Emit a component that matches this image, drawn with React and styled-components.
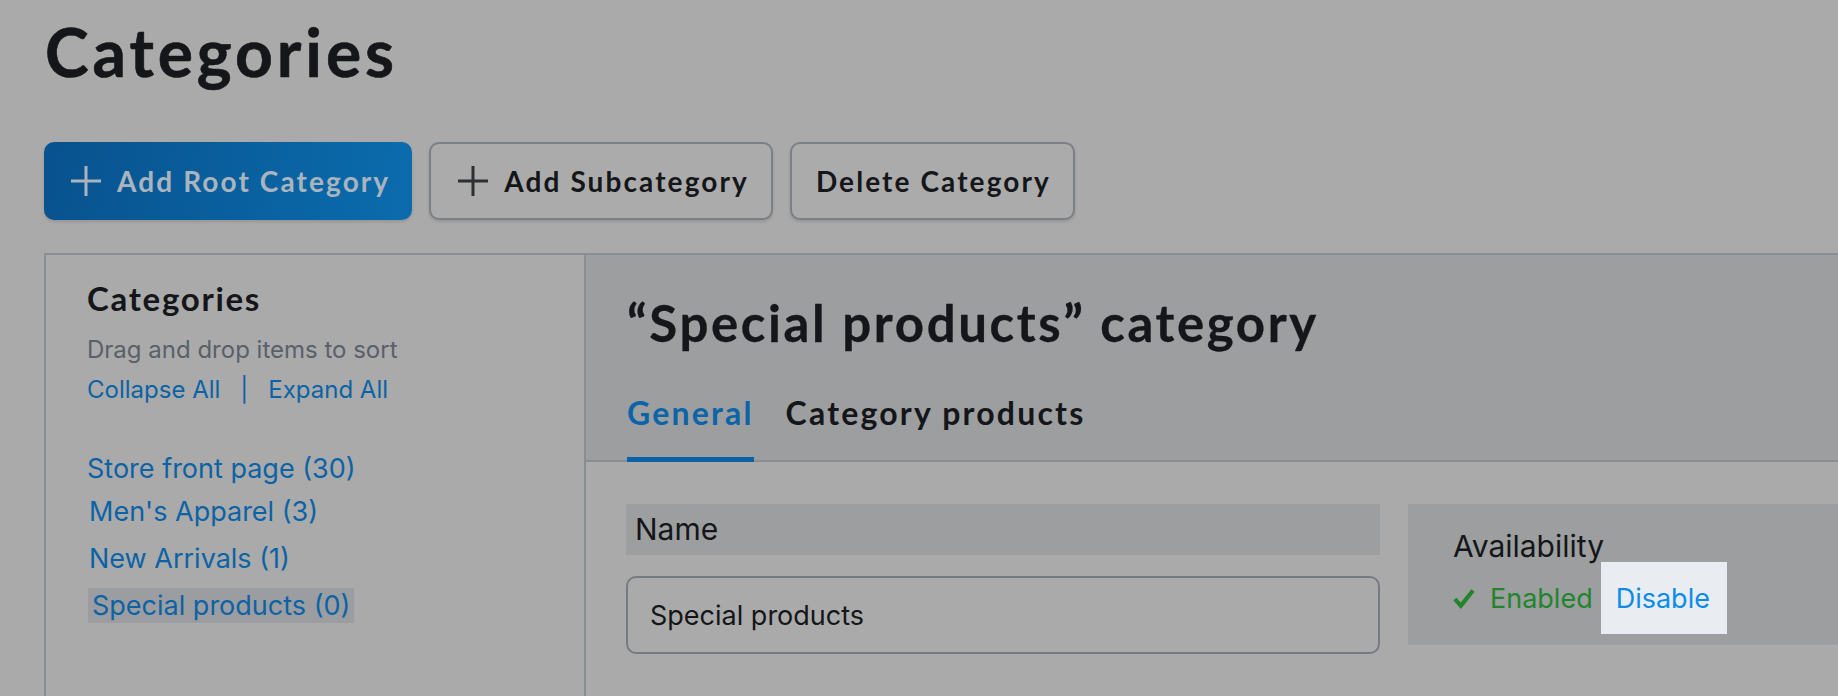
import React from "react";
import styled, { createGlobalStyle } from "styled-components";

const GlobalStyle = createGlobalStyle`
  html, body {
    margin: 0;
    padding: 0;
  }
  body {
    background: #aaaaaa;
    color: #141619;
    font-family: Inter, "Noto Sans", sans-serif;
    overflow: hidden;
  }
`;

const heading = `font-family: Lato, "Noto Sans", sans-serif; font-weight: 700;`;

const Page = styled.div`
  width: 1838px;
  height: 696px;
  box-sizing: border-box;
  padding: 21px 0 0 44px;
  overflow: hidden;
`;

const Title = styled.h1`
  ${heading}
  margin: -1px 0 1px 1px;
  font-size: 66px;
  line-height: 64px;
  letter-spacing: 3.9px;
  -webkit-text-stroke: 0.6px #141619;
`;

const Toolbar = styled.div`
  display: flex;
  gap: 17px;
  margin-top: 58px;
`;

const Button = styled.button`
  ${heading}
  display: inline-flex;
  align-items: center;
  gap: 15px;
  height: 78px;
  box-sizing: border-box;
  padding: 0 22px 0 24px;
  border-radius: 10px;
  font-size: 28px;
  letter-spacing: 2.1px;
  cursor: pointer;
  border: ${(p) => (p.$primary ? "none" : "2px solid #7b7f86")};
  background: ${(p) =>
    p.$primary ? "linear-gradient(100deg, #08528e, #0b6cad)" : "#ababab"};
  color: ${(p) => (p.$primary ? "#aab4be" : "#141619")};
  box-shadow: 0 2px 3px rgba(0, 0, 0, 0.12);

  svg {
    margin-left: 2px;
  }
`;

const Panel = styled.div`
  display: grid;
  grid-template-columns: 540px 1fr;
  width: 2000px;
  min-height: 480px;
  margin-top: 33px;
  border: 2px solid #8a8d92;
`;

const Sidebar = styled.aside`
  border-right: 2px solid #8a8d92;
  padding: 27px 0 0 41px;
`;

const SideTitle = styled.h2`
  ${heading}
  margin: 0 0 16px;
  font-size: 33px;
  line-height: 32px;
  letter-spacing: 1.7px;
`;

const Hint = styled.div`
  font-size: 24px;
  line-height: 40px;
  color: #59606a;
`;

const Tools = styled.div`
  font-size: 24px;
  line-height: 40px;
  color: #0b63a6;
`;

const Sep = styled.span`
  margin: 0 20px;
`;

const Tree = styled.div`
  margin-top: 41px;
  display: flex;
  flex-direction: column;
`;

const Children = styled.div`
  display: flex;
  flex-direction: column;
  align-items: flex-start;
  gap: 12px;
  margin: 7px 0 0 2px;
`;

const Node = styled.a`
  align-self: flex-start;
  font-size: 27px;
  line-height: ${(p) => (p.$root ? "36px" : "35px")};
  color: #0b63a6;
  padding: 0 ${(p) => (p.$active ? "4px" : "0")};
  margin-left: ${(p) => (p.$active ? "-1px" : "0")};
  background: ${(p) => (p.$active ? "#9c9da0" : "transparent")};
  text-decoration: none;
`;

const Main = styled.section`
  display: flex;
  flex-direction: column;
`;

const Header = styled.div`
  background: #9d9ea0;
  padding: 43px 0 0 41px;
  border-bottom: 2px solid #8a8d92;
`;

const Heading = styled.h2`
  ${heading}
  margin: 0;
  font-size: 51px;
  line-height: 49px;
  letter-spacing: 2.6px;
  -webkit-text-stroke: 0.3px #141619;
`;

const Tabs = styled.div`
  display: flex;
  gap: 32px;
  margin: 50px 0 -2px;
`;

const Tab = styled.div`
  ${heading}
  font-size: 32px;
  line-height: 32px;
  letter-spacing: 2.2px;
  padding-bottom: 28px;
  border-bottom: 5px solid ${(p) => (p.$active ? "#0862a5" : "transparent")};
  color: ${(p) => (p.$active ? "#0b64a8" : "#141619")};
`;

const Content = styled.div`
  display: grid;
  grid-template-columns: 754px 1fr;
  gap: 28px;
  align-items: start;
  padding: 42px 0 0 40px;
`;

const Field = styled.div`
  display: flex;
  flex-direction: column;
`;

const Label = styled.label`
  height: 51px;
  line-height: 51px;
  padding-left: 9px;
  background: #9d9ea0;
  font-size: 30px;
`;

const Input = styled.input`
  margin-top: 21px;
  height: 78px;
  box-sizing: border-box;
  padding: 0 22px;
  border: 2px solid #767b83;
  border-radius: 10px;
  background: #aaaaaa;
  font-family: Inter, "Noto Sans", sans-serif;
  font-size: 27px;
  color: #141619;
  outline: none;
`;

const Availability = styled.div`
  background: #9d9ea0;
  padding: 23px 0 11px 45px;
`;

const AvailTitle = styled.div`
  font-size: 30px;
  line-height: 35px;
  padding-top: 2px;
  margin-bottom: -2px;
`;

const StatusRow = styled.div`
  display: flex;
  align-items: center;
  height: 72px;
`;

const Enabled = styled.span`
  display: inline-flex;
  align-items: center;
  gap: 15px;
  font-size: 27px;
  color: #22852c;
`;

const Disable = styled.button`
  margin-left: 8px;
  height: 72px;
  padding: 0 17px 0 15px;
  border: none;
  background: #e9edf1;
  color: #0a8ceb;
  font-family: Inter, "Noto Sans", sans-serif;
  font-size: 27px;
  cursor: pointer;
`;

const Plus = ({ color }) => (
  <svg width="32" height="32" viewBox="0 0 32 32">
    <path d="M16 1v30M1 16h30" stroke={color} strokeWidth="3" />
  </svg>
);

const Check = () => (
  <svg width="22" height="21" viewBox="0 0 22 21">
    <path
      d="M2 11l5.8 6.8L20 2.5"
      fill="none"
      stroke="#22852c"
      strokeWidth="4.2"
      strokeLinejoin="miter"
    />
  </svg>
);

export default function App() {
  return (
    <Page>
      <GlobalStyle />
      <Title>Categories</Title>
      <Toolbar>
        <Button $primary>
          <Plus color="#aab4be" />
          Add Root Category
        </Button>
        <Button>
          <Plus color="#2c2f33" />
          Add Subcategory
        </Button>
        <Button>Delete Category</Button>
      </Toolbar>
      <Panel>
        <Sidebar>
          <SideTitle>Categories</SideTitle>
          <Hint>Drag and drop items to sort</Hint>
          <Tools>
            Collapse All<Sep>|</Sep>Expand All
          </Tools>
          <Tree>
            <Node $root>Store front page (30)</Node>
            <Children>
              <Node>Men's Apparel (3)</Node>
              <Node>New Arrivals (1)</Node>
              <Node $active>Special products (0)</Node>
            </Children>
          </Tree>
        </Sidebar>
        <Main>
          <Header>
            <Heading>“Special products” category</Heading>
            <Tabs>
              <Tab $active>General</Tab>
              <Tab>Category products</Tab>
            </Tabs>
          </Header>
          <Content>
            <Field>
              <Label>Name</Label>
              <Input readOnly value="Special products" />
            </Field>
            <Availability>
              <AvailTitle>Availability</AvailTitle>
              <StatusRow>
                <Enabled>
                  <Check />
                  Enabled
                </Enabled>
                <Disable>Disable</Disable>
              </StatusRow>
            </Availability>
          </Content>
        </Main>
      </Panel>
    </Page>
  );
}
